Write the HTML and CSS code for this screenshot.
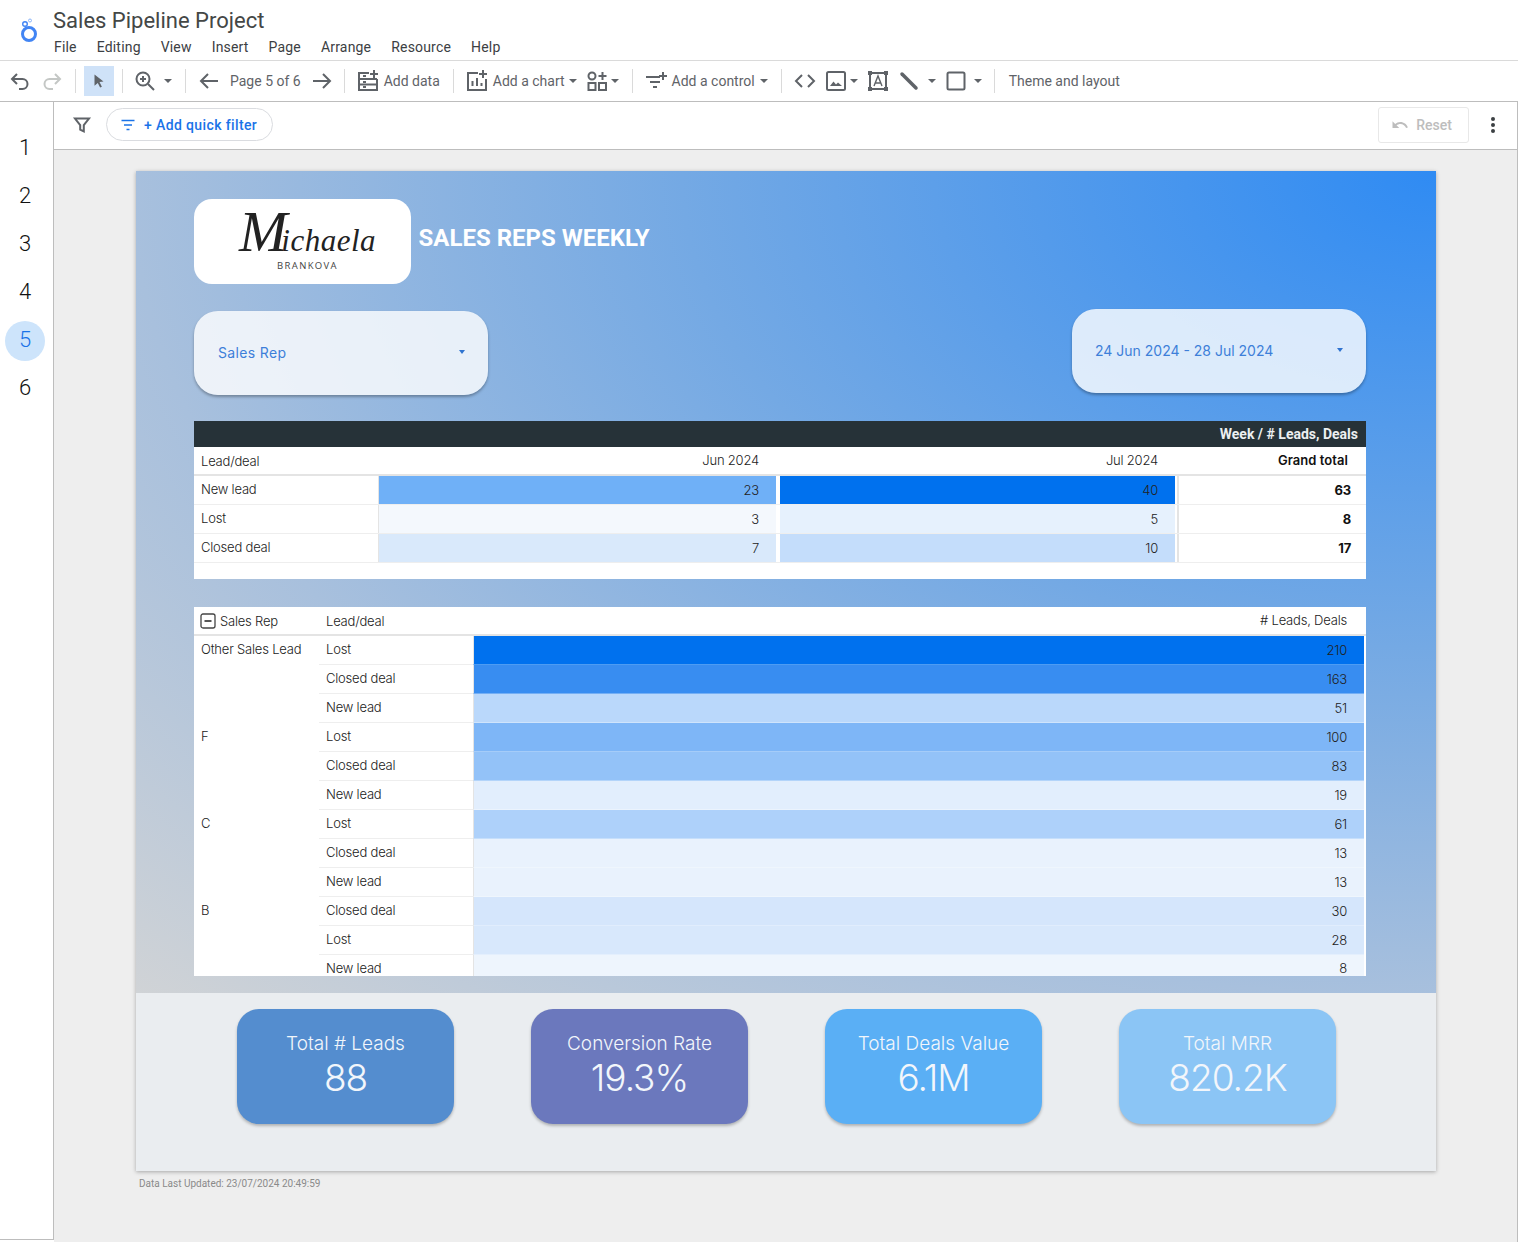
FILE: index.html
```html
<!DOCTYPE html>
<html lang="en">
<head>
  <meta charset="UTF-8">
  <title>Sales Pipeline Project</title>
  <link rel="stylesheet" href="styles.css">
</head>
<body>
  <header class="topbar">
    <svg class="app-logo" width="24" height="32" viewBox="0 0 24 32">
      <circle cx="12" cy="19" r="6.500" fill="none" stroke="#4285f4" stroke-width="3"/>
      <circle cx="8" cy="9" r="2.300" fill="none" stroke="#4285f4" stroke-width="1.400"/>
      <circle cx="13" cy="5.500" r="1.500" fill="none" stroke="#8ab4f8" stroke-width="1"/>
    </svg>
    <div>
      <div class="doc-title">Sales Pipeline Project</div>
      <nav class="menu">
        <span>File</span><span>Editing</span><span>View</span><span>Insert</span><span>Page</span><span>Arrange</span><span>Resource</span><span>Help</span>
      </nav>
    </div>
  </header>

  <div class="toolbar">
    <svg class="ico first" viewBox="0 0 24 24"><path d="M9 15L4 10l5-5M4 10h10.5a5 5 0 0 1 0 10H11"/></svg>
    <svg class="ico faded gap8" viewBox="0 0 24 24"><path d="M15 15l5-5-5-5M20 10H9.500a5 5 0 0 0 0 10H13"/></svg>
    <i class="sep"></i>
    <div class="cursor-btn">
      <svg width="16" height="16" viewBox="0 0 16 16"><path class="solid" d="M3.500 1.500l9 7-4 .6 2.400 4.600-1.800.9-2.300-4.700-3.300 2.800z"/></svg>
    </div>
    <i class="sep s8"></i>
    <svg class="ico" viewBox="0 0 24 24"><circle cx="10" cy="10" r="6.500"/><path d="M15 15l6 6M10 7v6M7 10h6"/></svg>
    <b class="caret c5"></b>
    <i class="sep"></i>
    <svg class="ico" viewBox="0 0 24 24"><path d="M21 12H4M11 5l-7 7 7 7"/></svg>
    <span class="tool-text page-text">Page 5 of 6</span>
    <svg class="ico" viewBox="0 0 24 24"><path d="M3 12h17M13 5l7 7-7 7"/></svg>
    <i class="sep s10"></i>
    <svg class="ico" viewBox="0 0 24 24"><path d="M13 4H3v17h18V10M3 10h18M3 15.500h18M7 7h3M7 13h3M7 18h3M18 1v8M14 5h8"/></svg>
    <span class="tool-text">Add data</span>
    <i class="sep s13"></i>
    <svg class="ico" viewBox="0 0 24 24"><path d="M13 4H3v17h18V10M7.500 17v-5M12 17V9M16.500 17v-3M18 1v8M14 5h8"/></svg>
    <span class="tool-text">Add a chart</span>
    <b class="caret c2"></b>
    <svg class="ico m6" viewBox="0 0 24 24"><circle cx="7" cy="7" r="3.500"/><path d="M3.500 14h7v7h-7zM14 14h7v7h-7zM17.500 3v8M13.500 7h8"/></svg>
    <b class="caret c0"></b>
    <i class="sep"></i>
    <svg class="ico" viewBox="0 0 24 24"><path d="M2 8h14M6 13h10M9 18h4M19 3v8M15 7h8"/></svg>
    <span class="tool-text">Add a control</span>
    <b class="caret c3"></b>
    <i class="sep"></i>
    <svg class="ico" viewBox="0 0 24 24"><path d="M9 6l-6 6 6 6M15 6l6 6-6 6"/></svg>
    <svg class="ico gap7" viewBox="0 0 24 24"><rect x="3" y="3" width="18" height="18" rx="1.500"/><path class="solid" d="M6 17l3.500-4.500 2.500 3 2-2 4 3.500z"/></svg>
    <b class="caret c0"></b>
    <svg class="ico m6" viewBox="0 0 24 24"><path d="M4 4h16v16H4z"/><path class="solid" d="M2 2h4v4H2zM18 2h4v4h-4zM2 18h4v4H2zM18 18h4v4h-4z"/><path class="thin" d="M8 17l4-10 4 10M9.500 14h5"/></svg>
    <svg class="ico gap7" viewBox="0 0 24 24"><path class="thick" d="M5 5l14 14"/></svg>
    <b class="caret c5"></b>
    <svg class="ico m6" viewBox="0 0 24 24"><rect x="3.500" y="3.500" width="17" height="17" rx="1.500"/></svg>
    <b class="caret c4"></b>
    <i class="sep s10"></i>
    <span class="theme-text">Theme and layout</span>
  </div>

  <div class="workspace">
    <aside class="pages">
      <div class="page-num">1</div>
      <div class="page-num">2</div>
      <div class="page-num">3</div>
      <div class="page-num">4</div>
      <div class="page-num current">5</div>
      <div class="page-num">6</div>
    </aside>

    <main class="main">
      <div class="filterbar">
        <svg class="funnel" width="20" height="20" viewBox="0 0 20 20"><path d="M3 3.500h14l-5.200 6.600v6.400l-3.600-1.800v-4.600z"/></svg>
        <div class="quick-filter">
          <svg width="16" height="16" viewBox="0 0 16 16"><path d="M1.500 3.500h13M4 8h8M6.500 12.500h3"/></svg>
          <span>+ Add quick filter</span>
        </div>
        <div class="reset">
          <svg width="18" height="18" viewBox="0 0 24 24"><path d="M12.500 8c-2.650 0-5.050.99-6.900 2.600L2 7v9h9l-3.620-3.620c1.390-1.160 3.160-1.880 5.120-1.880 3.540 0 6.550 2.310 7.600 5.500l2.370-.78C21.080 11.030 17.150 8 12.500 8z"/></svg>
          <span>Reset</span>
        </div>
        <div class="more"><i></i><i></i><i></i></div>
      </div>

      <div class="canvas">
        <div class="report">
          <section class="hero">
            <div class="hero-top">
              <div class="brand">
                <div class="signature"><span class="sig-cap">M</span>ichaela</div>
                <div class="brand-sub">BRANKOVA</div>
              </div>
              <h1 class="report-title">SALES REPS WEEKLY</h1>
            </div>

            <div class="filters">
              <div class="filter-box rep"><span>Sales Rep</span><b class="drop"></b></div>
              <div class="filter-box date"><span>24 Jun 2024 - 28 Jul 2024</span><b class="drop"></b></div>
            </div>

            <div class="pivot">
              <div class="pivot-title">Week / # Leads, Deals</div>
              <div class="p-row p-head">
                <div class="cell">Lead/deal</div>
                <div class="cell num">Jun 2024</div>
                <div class="cell num">Jul 2024</div>
                <div class="cell num total-head">Grand total</div>
              </div>
              <div class="p-row">
                <div class="cell">New lead</div>
                <div class="cell num h23">23</div>
                <div class="cell num h40">40</div>
                <div class="cell num total">63</div>
              </div>
              <div class="p-row">
                <div class="cell">Lost</div>
                <div class="cell num h3">3</div>
                <div class="cell num h5">5</div>
                <div class="cell num total">8</div>
              </div>
              <div class="p-row">
                <div class="cell">Closed deal</div>
                <div class="cell num h7">7</div>
                <div class="cell num h10">10</div>
                <div class="cell num total">17</div>
              </div>
            </div>

            <div class="reps">
              <div class="r-row r-head">
                <div class="cell rep-head"><svg width="16" height="16" viewBox="0 0 16 16"><rect x="1" y="1" width="14" height="14" rx="2"/><path d="M4.500 8h7"/></svg>Sales Rep</div>
                <div class="cell">Lead/deal</div>
                <div class="cell num"># Leads, Deals</div>
              </div>
              <div class="r-row"><div class="cell name">Other Sales Lead</div><div class="cell type">Lost</div><div class="cell num bar b210">210</div></div>
              <div class="r-row"><div class="cell name"></div><div class="cell type">Closed deal</div><div class="cell num bar b163">163</div></div>
              <div class="r-row"><div class="cell name"></div><div class="cell type">New lead</div><div class="cell num bar b51">51</div></div>
              <div class="r-row"><div class="cell name">F</div><div class="cell type">Lost</div><div class="cell num bar b100">100</div></div>
              <div class="r-row"><div class="cell name"></div><div class="cell type">Closed deal</div><div class="cell num bar b83">83</div></div>
              <div class="r-row"><div class="cell name"></div><div class="cell type">New lead</div><div class="cell num bar b19">19</div></div>
              <div class="r-row"><div class="cell name">C</div><div class="cell type">Lost</div><div class="cell num bar b61">61</div></div>
              <div class="r-row"><div class="cell name"></div><div class="cell type">Closed deal</div><div class="cell num bar b13">13</div></div>
              <div class="r-row"><div class="cell name"></div><div class="cell type">New lead</div><div class="cell num bar b13">13</div></div>
              <div class="r-row"><div class="cell name">B</div><div class="cell type">Closed deal</div><div class="cell num bar b30">30</div></div>
              <div class="r-row"><div class="cell name"></div><div class="cell type">Lost</div><div class="cell num bar b28">28</div></div>
              <div class="r-row last"><div class="cell name"></div><div class="cell type">New lead</div><div class="cell num bar b8">8</div></div>
            </div>
          </section>

          <section class="kpis">
            <div class="kpi k1"><div class="kpi-label">Total # Leads</div><div class="kpi-value">88</div></div>
            <div class="kpi k2"><div class="kpi-label">Conversion Rate</div><div class="kpi-value">19.3%</div></div>
            <div class="kpi k3"><div class="kpi-label">Total Deals Value</div><div class="kpi-value">6.1M</div></div>
            <div class="kpi k4"><div class="kpi-label">Total MRR</div><div class="kpi-value">820.2K</div></div>
          </section>
        </div>
        <div class="updated">Data Last Updated: 23/07/2024 20:49:59</div>
      </div>
    </main>
  </div>
</body>
</html>
```
FILE: styles.css
```css
* {
  box-sizing: border-box;
}
html, body {
  margin: 0;
  height: 100%;
  overflow: hidden;
}
body {
  display: flex;
  flex-direction: column;
  font-family: Roboto, sans-serif;
  background: #fff;
}

/* top bar */
.topbar {
  height: 61px;
  display: flex;
  border-bottom: 1px solid #dadada;
}
.app-logo {
  margin: 15px 0 0 17px;
}
.doc-title {
  margin: 8px 0 0 12px;
  font-size: 22px;
  line-height: 26px;
  color: #444746;
}
.menu {
  display: flex;
  gap: 20px;
  margin: 4px 0 0 13px;
  font-size: 14px;
  line-height: 18px;
  letter-spacing: .18px;
  color: #3c4043;
}

/* toolbar */
.toolbar {
  height: 41px;
  display: flex;
  align-items: center;
  border-bottom: 1px solid #bdbdbd;
  padding-left: 8px;
  font-size: 14px;
  color: #5f6368;
}
.ico {
  width: 24px;
  height: 24px;
  flex: none;
  fill: none;
  stroke: #5f6368;
  stroke-width: 2;
}
.ico .solid, .cursor-btn .solid {
  fill: #5f6368;
  stroke: none;
}
.ico .thin {
  stroke-width: 1.400;
}
.ico .thick {
  stroke-width: 3.500;
  stroke-linecap: round;
}
.ico.faded {
  stroke: #c4c7c5;
}
.gap8 { margin-left: 8px; }
.gap7 { margin-left: 7px; }
.m6 { margin-left: 6px; }
.sep {
  width: 1px;
  height: 24px;
  background: #dadada;
  margin: 0 11px;
  flex: none;
}
.sep.s8 { margin: 0 10px 0 8px; }
.sep.s10 { margin: 0 11px 0 10px; }
.sep.s13 { margin: 0 11px 0 13px; }
.cursor-btn {
  width: 30px;
  height: 30px;
  display: flex;
  align-items: center;
  justify-content: center;
  background: #cfe2f8;
  margin-left: -3px;
}
.caret {
  width: 0;
  height: 0;
  flex: none;
  border-left: 4px solid transparent;
  border-right: 4px solid transparent;
  border-top: 4px solid #5f6368;
}
.c0 { margin-left: 2px; margin-right: 2px; }
.c2 { margin-left: 4px; margin-right: 2px; }
.c3 { margin-left: 5px; margin-right: 2px; }
.c4 { margin-left: 6px; margin-right: 2px; }
.c5 { margin-left: 7px; margin-right: 2px; }
.tool-text {
  margin-left: 4px;
  white-space: nowrap;
}
.page-text {
  margin: 0 9px;
}
.theme-text {
  margin-left: 3px;
  white-space: nowrap;
}

/* page list + main */
.workspace {
  flex: 1;
  display: flex;
  min-height: 0;
}
.pages {
  width: 54px;
  flex: none;
  padding: 25px 0 0 5px;
  border-right: 1px solid #bdbdbd;
  border-bottom: 1px solid #bdbdbd;
  margin-bottom: 2px;
}
.page-num {
  width: 40px;
  height: 40px;
  margin-bottom: 8px;
  border-radius: 50%;
  display: flex;
  align-items: center;
  justify-content: center;
  font-size: 22px;
  font-weight: 300;
  color: #111;
}
.page-num.current {
  background: #cde4fb;
  color: #1a73e8;
  padding-bottom: 4px;
  transform: translateY(2px);
}
.main {
  flex: 1;
  display: flex;
  flex-direction: column;
  border-right: 1px solid #bdbdbd;
  min-width: 0;
}
.filterbar {
  height: 48px;
  flex: none;
  display: flex;
  align-items: center;
  background: #fff;
  border-bottom: 1px solid #bdbdbd;
  padding: 0 0 2px 18px;
}
.funnel {
  fill: none;
  stroke: #5f6368;
  stroke-width: 2;
}
.quick-filter {
  display: flex;
  align-items: center;
  gap: 8px;
  height: 33px;
  margin-left: 14px;
  padding: 0 15px 0 13px;
  border: 1px solid #dadce0;
  border-radius: 17px;
  font-size: 14px;
  font-weight: 500;
  letter-spacing: .38px;
  color: #1a73e8;
}
.quick-filter svg {
  fill: none;
  stroke: #1a73e8;
  stroke-width: 1.500;
}
.reset {
  display: flex;
  align-items: center;
  gap: 7px;
  height: 36px;
  margin-left: auto;
  padding: 0 16px 0 12px;
  border: 1px solid #e8e8e8;
  border-radius: 3px;
  font-size: 14px;
  font-weight: 500;
  color: #bdbdbd;
}
.reset svg {
  fill: #bdbdbd;
}
.more {
  display: flex;
  flex-direction: column;
  gap: 2px;
  margin: 0 22px 0 22px;
}
.more i {
  width: 4px;
  height: 4px;
  border-radius: 50%;
  background: #3c4043;
}

/* report */
.canvas {
  flex: 1;
  background: #eee;
  padding: 21px 0 0 82px;
}
.report {
  width: 1300px;
  height: 1000px;
  box-shadow: 0 1px 4px rgba(0, 0, 0, .3);
  font-family: Inter, sans-serif;
  font-weight: 300;
}
.hero {
  height: 822px;
  padding: 28px 70px 0 58px;
  background: radial-gradient(ellipse farthest-corner at top right, #2f8bf3 0%, #74a9e4 41%, #a8c0dd 71%, #d0d3d6 100%);
}
.hero-top {
  display: flex;
  align-items: flex-start;
  height: 85px;
}
.brand {
  width: 217px;
  height: 85px;
  flex: none;
  background: #fff;
  border-radius: 18px;
  text-align: center;
  overflow: hidden;
  color: #222;
  padding-left: 10px;
}
.signature {
  font-family: "Liberation Serif", serif;
  font-style: italic;
  font-size: 31px;
  line-height: 56px;
  height: 56px;
  margin-top: 5px;
  letter-spacing: .5px;
}
.sig-cap {
  font-size: 58px;
  letter-spacing: -6px;
}
.brand-sub {
  font-family: "Open Sans", sans-serif;
  font-size: 9.500px;
  letter-spacing: 1.350px;
  font-weight: 400;
  line-height: 12px;
  color: #444;
}
.report-title {
  margin: 24px 0 0 7.500px;
  font-family: Roboto, sans-serif;
  font-size: 24px;
  line-height: 30px;
  font-weight: 700;
  color: #fff;
}
.filters {
  display: flex;
  justify-content: space-between;
  align-items: flex-start;
  height: 137px;
  padding-top: 25px;
}
.filter-box {
  width: 294px;
  height: 84px;
  display: flex;
  align-items: center;
  justify-content: space-between;
  padding: 0 23px 2px 23px;
  border-radius: 24px;
  background: rgba(255, 255, 255, .8);
  box-shadow: 0 2px 3px rgba(0, 0, 0, .3);
  font-size: 14px;
  font-weight: 400;
  color: #3d7fd9;
}
.filter-box.rep {
  margin-top: 2px;
  padding-left: 24px;
  letter-spacing: .35px;
}
.drop {
  width: 0;
  height: 0;
  border-left: 3.500px solid transparent;
  border-right: 3.500px solid transparent;
  border-top: 4px solid #2f73d0;
}

/* tables */
.pivot, .reps {
  width: 1172px;
  background: #fff;
  font-size: 13px;
  letter-spacing: -.2px;
  color: #222;
}
.pivot {
  height: 158px;
}
.reps {
  height: 369px;
  margin-top: 28px;
  overflow: hidden;
}
.pivot-title {
  height: 26px;
  padding: 0 8px 0 0;
  background: #263238;
  color: #eceff1;
  font-family: Roboto, sans-serif;
  font-size: 14px;
  font-weight: 700;
  letter-spacing: 0;
  line-height: 27px;
  text-align: right;
}
.cell {
  display: flex;
  align-items: center;
  padding: 0 0 2px 7px;
  white-space: nowrap;
}
.num {
  justify-content: flex-end;
  padding: 0 17px 0 0;
}
.p-row {
  display: grid;
  grid-template-columns: 184px 398px 399px 191px;
  height: 29px;
  border-bottom: 1px solid #eee;
}
.p-row.p-head {
  height: 29px;
  border-bottom: 2px solid #e4e4e4;
}
.p-head .cell {
  padding-bottom: 0;
}
.p-head .num {
  padding-bottom: 2px;
}
.p-row .cell:nth-child(2) {
  border-left: 1px solid #e4e4e4;
}
.p-row:not(.p-head) .cell:nth-child(3) {
  margin-left: 4px;
}
.p-row .total {
  border-left: 2px solid #e4e4e4;
  margin-left: 2px;
  padding-right: 15px;
  font-weight: 700;
  color: #111;
}
.p-row .total-head {
  font-weight: 600;
  letter-spacing: .05px;
  color: #111;
  padding-right: 18px;
}
.p-head .cell {
  border-left: none !important;
}
.h23 { background: #6fb0f7; }
.h40 { background: #0071ee; }
.h3 { background: #f4f8fd; }
.h5 { background: #e6f1fd; }
.h7 { background: #d9e9fb; }
.h10 { background: #c4ddfb; }

.r-row {
  display: grid;
  grid-template-columns: 125px 154px 893px;
  height: 29px;
}
.r-row.r-head {
  border-bottom: 2px solid #e4e4e4;
}
.r-head .cell {
  padding-bottom: 0;
}
.r-head .num {
  padding: 0 19px 2px 0;
}
.rep-head {
  padding-left: 6px;
  gap: 4px;
}
.rep-head svg {
  fill: none;
  stroke: #444;
  stroke-width: 1.300;
}
.rep-head svg path {
  stroke-width: 1.800;
}
.type {
  padding-left: 7px;
  border-bottom: 1px solid #eee;
}
.name {
  align-items: flex-start;
  padding-top: 5px;
}
.bar {
  margin-right: 2px;
  border-left: 1px solid #e4e4e4;
  border-bottom: 1px solid rgba(255, 255, 255, .3);
}
/* the last row is cut by the table edge, keep its text inside */
.r-row.last {
  height: 21px;
}
.r-row.last .cell {
  align-items: flex-start;
  padding-top: 5px;
  padding-bottom: 0;
  border-bottom: none;
}
.b210 { background: #0071ee; }
.b163 { background: #388df1; }
.b51 { background: #bad8fb; }
.b100 { background: #7eb6f7; }
.b83 { background: #93c2f8; }
.b61 { background: #aed1fa; }
.b30 { background: #d5e6fc; }
.b28 { background: #d8e8fc; }
.b19 { background: #e2eefd; }
.b13 { background: #e9f2fd; }
.b8 { background: #eef5fd; }

/* kpi cards */
.kpis {
  height: 178px;
  display: flex;
  gap: 77px;
  padding: 16px 0 0 101px;
  background: #eaedf0;
}
.kpi {
  width: 217px;
  height: 115px;
  border-radius: 22px;
  box-shadow: 0 2px 3px rgba(0, 0, 0, .25);
  color: #f2f6fb;
  text-align: center;
  padding-top: 23px;
}
.kpi-label {
  font-size: 19px;
  line-height: 24px;
}
.kpi-value {
  font-size: 37px;
  line-height: 44px;
  letter-spacing: -1px;
}
.k1 { background: #548dcf; }
.k2 { background: #6b78bd; }
.k3 { background: #5aaff5; }
.k4 { background: #8bc5f5; }

.updated {
  margin: 7px 0 0 3px;
  font-family: Roboto, sans-serif;
  font-size: 10px;
  color: #8a8a8a;
}
```
